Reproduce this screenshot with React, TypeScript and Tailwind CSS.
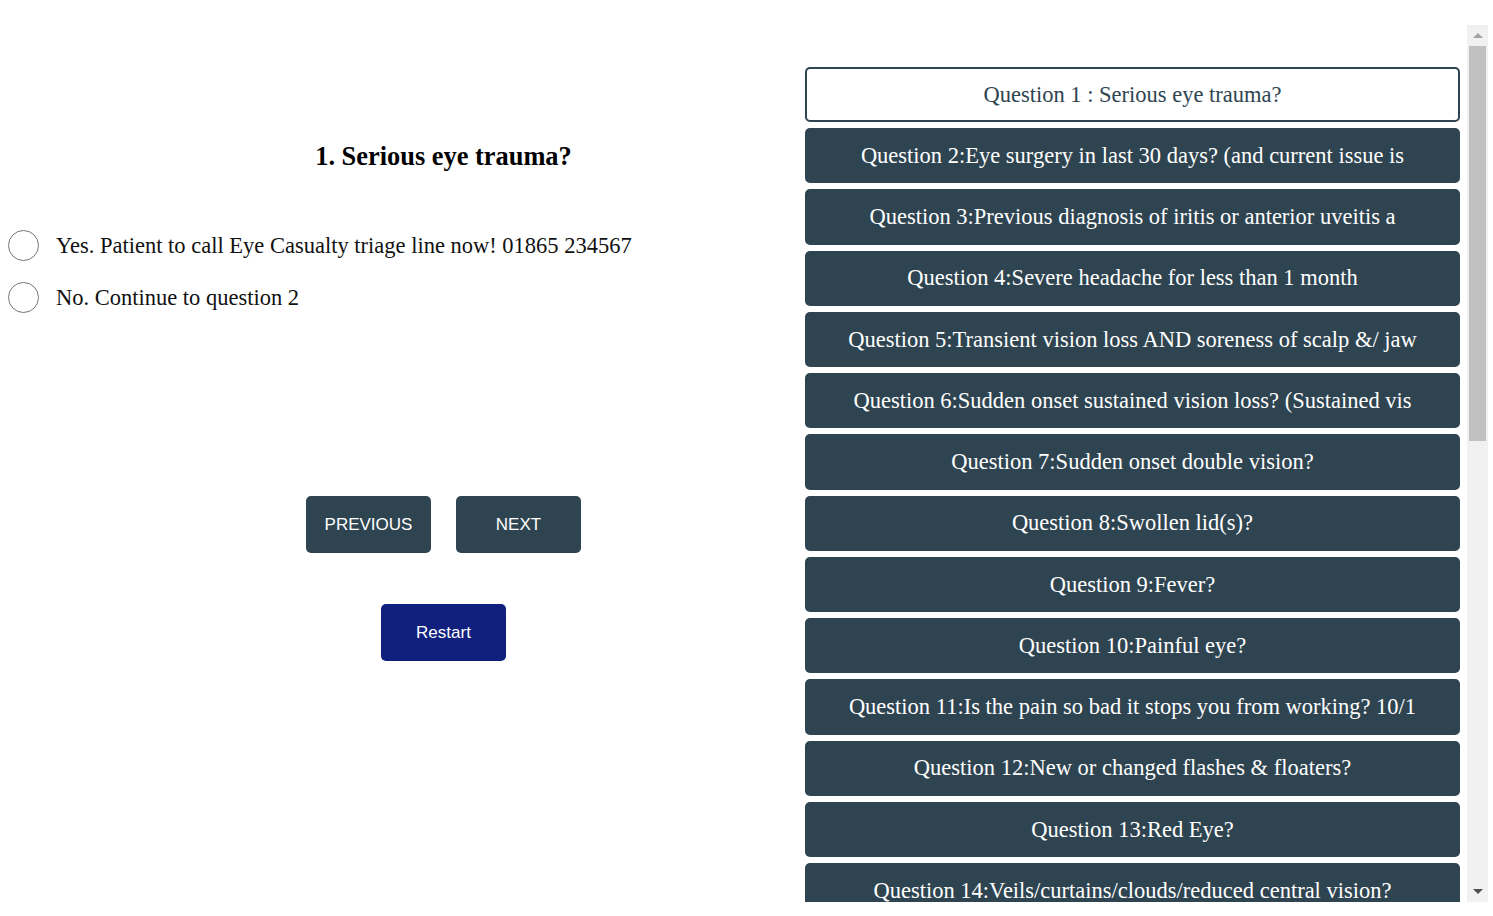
import React from "react";

const questions = [
  "Question 2:Eye surgery in last 30 days? (and current issue is",
  "Question 3:Previous diagnosis of iritis or anterior uveitis a",
  "Question 4:Severe headache for less than 1 month",
  "Question 5:Transient vision loss AND soreness of scalp &/ jaw",
  "Question 6:Sudden onset sustained vision loss? (Sustained vis",
  "Question 7:Sudden onset double vision?",
  "Question 8:Swollen lid(s)?",
  "Question 9:Fever?",
  "Question 10:Painful eye?",
  "Question 11:Is the pain so bad it stops you from working? 10/1",
  "Question 12:New or changed flashes & floaters?",
  "Question 13:Red Eye?",
  "Question 14:Veils/curtains/clouds/reduced central vision?",
];

const serif = { fontFamily: '"Liberation Serif", "Times New Roman", serif' };
const sans = { fontFamily: '"Liberation Sans", Arial, sans-serif' };

export default function App() {
  return (
    <div className="flex w-[1493px] h-[916px] overflow-hidden bg-white">
      <div className="w-[805px] shrink-0 flex flex-col" style={serif}>
        <div className="pl-[82px] pt-[140px] flex justify-center">
          <h1 className="text-[26.4px] leading-[32px] font-bold text-black">1. Serious eye trauma?</h1>
        </div>
        <div className="mt-[58px] pl-[8px] flex flex-col gap-[21px]">
          {[
            "Yes. Patient to call Eye Casualty triage line now! 01865 234567",
            "No. Continue to question 2",
          ].map((t) => (
            <label key={t} className="flex items-center h-[31px]">
              <span className="w-[31px] h-[31px] rounded-full border border-[#767676] bg-white shrink-0" />
              <span className="ml-[17px] text-[22.5px] text-[#111]">{t}</span>
            </label>
          ))}
        </div>
        <div className="pl-[82px] mt-[183px] flex justify-center gap-[25px]" style={sans}>
          <button className="w-[125px] h-[57px] rounded-[5px] bg-[#2f4451] text-white text-[17px]">PREVIOUS</button>
          <button className="w-[125px] h-[57px] rounded-[5px] bg-[#2f4451] text-white text-[17px]">NEXT</button>
        </div>
        <div className="pl-[82px] mt-[51px] flex justify-center" style={sans}>
          <button className="w-[125px] h-[57px] rounded-[5px] bg-[#111f7d] text-white text-[17px]">Restart</button>
        </div>
      </div>
      <div className="mt-[25px] w-[683px] h-[877px] flex shrink-0">
        <div className="flex-1 overflow-hidden pt-[42px] pr-[7px] flex flex-col gap-[6px]" style={serif}>
          <div className="h-[55px] shrink-0 rounded-[5px] border-2 border-[#2f4451] bg-white text-[#2f4451] text-[22.5px] flex items-center justify-center whitespace-nowrap">
            Question 1 : Serious eye trauma?
          </div>
          {questions.map((q) => (
            <div
              key={q}
              className="h-[55.25px] shrink-0 rounded-[5px] bg-[#2f4451] text-white text-[22.5px] flex items-center justify-center whitespace-nowrap overflow-hidden"
            >
              {q}
            </div>
          ))}
        </div>
        <div className="w-[21px] shrink-0 bg-[#f1f1f1] flex flex-col items-center">
          <div className="h-[21px] w-full flex items-center justify-center">
            <div className="w-0 h-0 border-l-[5px] border-r-[5px] border-b-[5px] border-l-transparent border-r-transparent border-b-[#a3a3a3]" />
          </div>
          <div className="w-[17px] h-[395px] bg-[#c1c1c1]" />
          <div className="flex-1" />
          <div className="h-[21px] w-full flex items-center justify-center">
            <div className="w-0 h-0 border-l-[5px] border-r-[5px] border-t-[5px] border-l-transparent border-r-transparent border-t-[#505050]" />
          </div>
        </div>
      </div>
    </div>
  );
}
